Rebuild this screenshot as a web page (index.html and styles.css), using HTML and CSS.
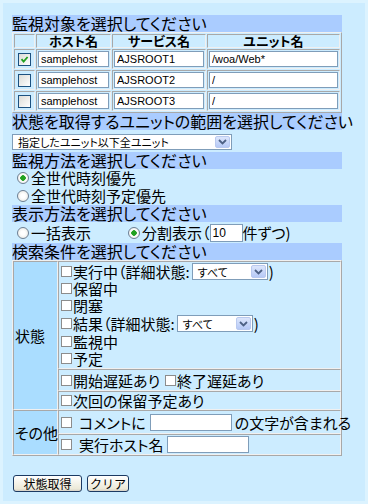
FILE: index.html
```html
<!DOCTYPE html>
<html>
    <head>
        <meta charset="utf-8">
        <title>監視条件の選択</title>
        <link rel="stylesheet" href="styles.css">
    </head>
    <body>
        <div id="page">
            <div class="band">監視対象を選択してください</div>
            <table class="grid targets">
                <colgroup>
                    <col class="c-chk"><col class="c-host"><col class="c-svc"><col>
                </colgroup>
                <tr><th></th><th>ホスト名</th><th>サービス名</th><th>ユニット名</th></tr>
                <tr>
                    <td class="chk"><span class="xpbox"><svg width="11" height="11" viewBox="0 0 11 11"><path d="M2.5 5.2 L4.6 7.6 L8.6 3" fill="none" stroke="#21a121" stroke-width="1.8"/></svg></span></td>
                    <td><input class="field" type="text" value="samplehost"></td>
                    <td><input class="field" type="text" value="AJSROOT1"></td>
                    <td><input class="field" type="text" value="/woa/Web*"></td>
                </tr>
                <tr>
                    <td class="chk"><span class="xpbox"></span></td>
                    <td><input class="field" type="text" value="samplehost"></td>
                    <td><input class="field" type="text" value="AJSROOT2"></td>
                    <td><input class="field" type="text" value="/"></td>
                </tr>
                <tr>
                    <td class="chk"><span class="xpbox"></span></td>
                    <td><input class="field" type="text" value="samplehost"></td>
                    <td><input class="field" type="text" value="AJSROOT3"></td>
                    <td><input class="field" type="text" value="/"></td>
                </tr>
            </table>

            <div class="band">状態を取得するユニットの範囲を選択してください</div>
            <div class="combo wide">
                <span class="combo-text">指定したユニット以下全ユニット</span>
                <span class="combo-btn"><svg width="9" height="6" viewBox="0 0 9 6"><path d="M1 1 L4.5 4.5 L8 1" fill="none" stroke="#4d6185" stroke-width="1.8"/></svg></span>
            </div>

            <div class="band">監視方法を選択してください</div>
            <label class="opt big"><input class="rd" type="radio" name="method" checked>全世代時刻優先</label>
            <label class="opt big"><input class="rd" type="radio" name="method">全世代時刻予定優先</label>

            <div class="band">表示方法を選択してください</div>
            <div class="disp">
                <label class="opt"><input class="rd" type="radio" name="disp">一括表示</label>
                <label class="opt split"><input class="rd" type="radio" name="disp" checked>分割表示（<input class="field num" type="text" value="10">件ずつ)</label>
            </div>

            <div class="band">検索条件を選択してください</div>
            <table class="grid search">
                <tr class="r-state">
                    <td class="lbl" rowspan="3">状態</td>
                    <td>
                        <div class="line"><input class="ck" type="checkbox">実行中（詳細状態:
                            <span class="combo small">
                                <span class="combo-text">すべて</span>
                                <span class="combo-btn"><svg width="9" height="6" viewBox="0 0 9 6"><path d="M1 1 L4.5 4.5 L8 1" fill="none" stroke="#4d6185" stroke-width="1.8"/></svg></span>
                            </span>)</div>
                        <div class="line"><input class="ck" type="checkbox">保留中</div>
                        <div class="line"><input class="ck" type="checkbox">閉塞</div>
                        <div class="line tall"><input class="ck" type="checkbox">結果（詳細状態:
                            <span class="combo small">
                                <span class="combo-text">すべて</span>
                                <span class="combo-btn"><svg width="9" height="6" viewBox="0 0 9 6"><path d="M1 1 L4.5 4.5 L8 1" fill="none" stroke="#4d6185" stroke-width="1.8"/></svg></span>
                            </span>)</div>
                        <div class="line"><input class="ck" type="checkbox">監視中</div>
                        <div class="line"><input class="ck" type="checkbox">予定</div>
                    </td>
                </tr>
                <tr>
                    <td><div class="line h18"><input class="ck" type="checkbox">開始遅延あり<input class="ck sep" type="checkbox">終了遅延あり</div></td>
                </tr>
                <tr>
                    <td><div class="line h15"><input class="ck" type="checkbox">次回の保留予定あり</div></td>
                </tr>
                <tr>
                    <td class="lbl" rowspan="2">その他</td>
                    <td><div class="line h20"><input class="ck gap" type="checkbox">コメントに<input class="field txt" type="text">の文字が含まれる</div></td>
                </tr>
                <tr>
                    <td><div class="line h17"><input class="ck gap" type="checkbox">実行ホスト名<input class="field txt host" type="text"></div></td>
                </tr>
            </table>

            <div class="actions">
                <button class="btn get">状態取得</button>
                <button class="btn">クリア</button>
            </div>
        </div>
    </body>
</html>
```

FILE: styles.css
```css
body {
    margin: 0;
    background: #dcf3ff;
    font-family: "Noto Sans CJK JP", sans-serif;
    font-feature-settings: "palt";
    color: #000;
}

#page {
    margin: 3px;
    height: 498px;
    box-sizing: border-box;
    padding: 12px 9px 0;
    background: #ccecff;
}

.band {
    width: 330px;
    height: 17px;
    line-height: 17px;
    font-size: 16px;
    background: #aaccff;
    white-space: nowrap;
}

/* table borders look like the old border=1 tables */
.grid {
    width: 330px;
    table-layout: fixed;
    border-collapse: separate;
    border-spacing: 1px;
    border: 1px solid;
    border-color: #f0f0f0 #a8a8a8 #a8a8a8 #f0f0f0;
}
.grid td, .grid th {
    border: 1px solid;
    border-color: #a8a8a8 #f0f0f0 #f0f0f0 #a8a8a8;
    padding: 0;
}

.c-chk { width: 21px; }
.c-host { width: 75px; }
.c-svc { width: 94px; }

.targets th {
    height: 12px;
    line-height: 12px;
    font-size: 13px;
    font-weight: bold;
}
.targets td { padding: 1px; }

.xpbox {
    display: block;
    margin: 0 auto;
    width: 13px;
    height: 13px;
    box-sizing: border-box;
    border: 1px solid #1c5180;
    background: linear-gradient(135deg, #dcdcd7, #ffffff);
}
.xpbox svg { display: block; }

.field {
    display: block;
    flex-shrink: 0;
    box-sizing: border-box;
    width: 100%;
    height: 16px;
    margin: 0;
    padding: 0 2px;
    border: 1px solid #7f9db9;
    background: #fff;
    font-family: "Liberation Sans", Arial, sans-serif;
    font-size: 11px;
}

.combo {
    display: flex;
    align-items: center;
    flex-shrink: 0;
    box-sizing: border-box;
    border: 1px solid #7f9db9;
    background: #fff;
    padding: 1px;
}
.combo-text {
    flex: 1;
    font-size: 11px;
    line-height: 14px;
    padding-left: 4px;
    white-space: nowrap;
}
.combo-btn {
    display: flex;
    align-items: center;
    justify-content: center;
    width: 15px;
    height: 100%;
    border: 1px solid #b9c9ef;
    box-sizing: border-box;
    border-radius: 2px;
    background: linear-gradient(#dce6fc, #b6c9f6);
}
.combo.wide {
    width: 220px;
    height: 16px;
    margin: 4px 0 2px;
}
.combo.small {
    width: 76px;
    height: 17px;
    margin: 0 1px 0 2px;
}

.opt {
    display: flex;
    align-items: center;
    white-space: nowrap;
}
.opt.big {
    height: 18px;
    line-height: 18px;
    font-size: 15px;
    padding-left: 4px;
}

.rd {
    appearance: none;
    flex-shrink: 0;
    width: 12px;
    height: 12px;
    margin: 0 2px 0 1px;
    border: 1px solid #6d7f94;
    border-radius: 50%;
    background: radial-gradient(circle, #fff 30%, #e2e2dc 100%);
}
.rd:checked {
    background: radial-gradient(circle, #21a121 0 2.5px, #fff 3px 30%, #e2e2dc 100%);
}

.disp {
    display: flex;
    align-items: center;
    height: 19px;
    line-height: 19px;
    margin: 1px 0 1px;
    font-size: 15px;
    padding-left: 4px;
}
.disp .split { margin-left: 36px; }
.field.num {
    width: 33px;
    height: 18px;
    font-size: 12px;
}

.search { border-spacing: 0; }
.search td { padding: 1px 2px; }
.search .lbl {
    width: 41px;
    padding: 0 1px;
    background: #aaddff;
    font-size: 15px;
    vertical-align: middle;
    white-space: nowrap;
}

.line {
    display: flex;
    align-items: center;
    height: 17px;
    line-height: 17px;
    font-size: 15px;
    white-space: nowrap;
}
.line.tall { height: 19px; }
.line.h15 { height: 15px; line-height: 15px; }
.line.h17 { height: 17px; }
.line.h18 { height: 18px; }
.line.h20 { height: 20px; }

.ck {
    appearance: none;
    flex-shrink: 0;
    width: 11px;
    height: 11px;
    margin: 0 1px 0 0;
    border: 1px solid #8c8c8c;
    background: #fff;
}
.ck.sep { margin-left: 5px; }
.ck.gap { margin-right: 7px; }

.field.txt {
    width: 82px;
    height: 17px;
    margin: 0 3px 0 4px;
}
.field.host { margin-left: 3px; }

.actions {
    display: flex;
    gap: 5px;
    margin-top: 19px;
    padding-left: 1px;
}
.btn {
    height: 17px;
    padding: 0 2px;
    border: 1px solid #1b3a63;
    border-radius: 3px;
    background: linear-gradient(#ffffff, #ece9d8 85%, #d6d0c5);
    font-family: "Noto Sans CJK JP", sans-serif;
    font-size: 12px;
    line-height: 13px;
}
.btn.get { width: 69px; }
```
